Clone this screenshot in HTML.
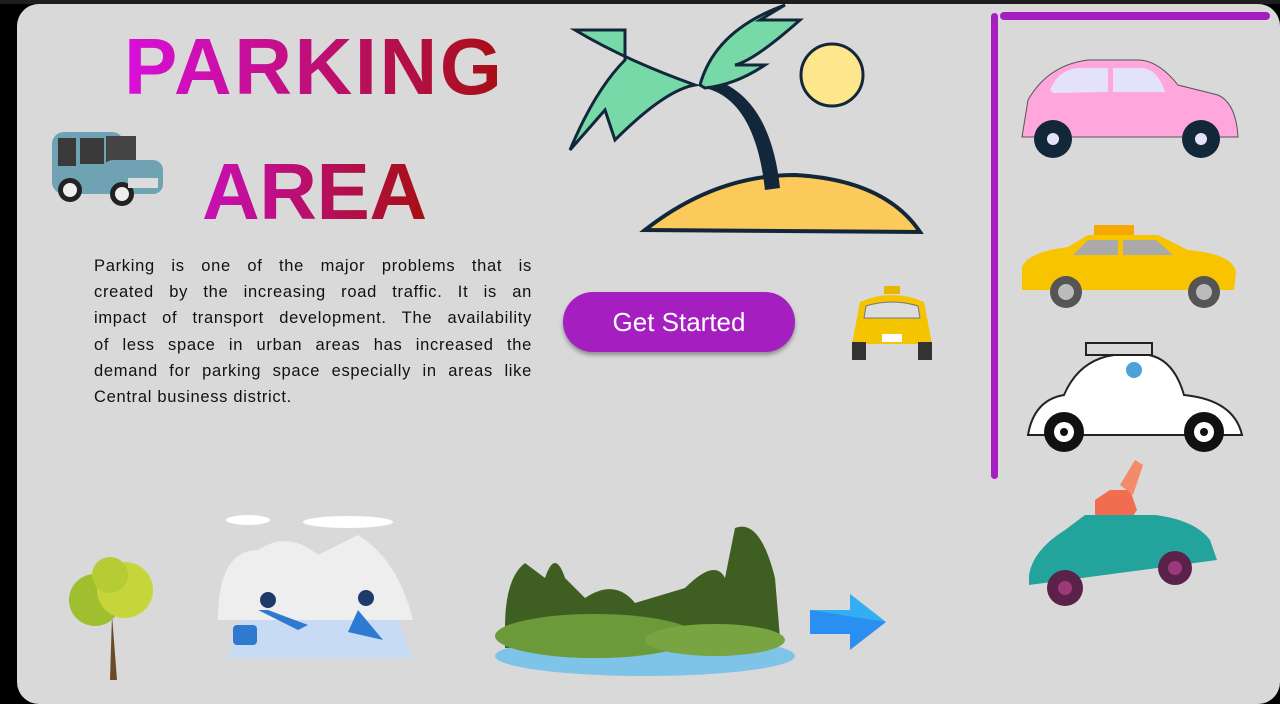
<!DOCTYPE html>
<html><head><meta charset="utf-8"><style>
html,body{margin:0;padding:0;width:1280px;height:684px;overflow:hidden;background:#000;font-family:"Liberation Sans",sans-serif}
.top{position:absolute;left:0;top:0;width:1280px;height:4px;background:#1e1e1e}
.card{position:absolute;left:17px;top:4px;width:1263px;height:700px;background:#d9d9d9;border-radius:22px}
.t{position:absolute;font-weight:bold;background:linear-gradient(90deg,#d80fdc,#a70f12);-webkit-background-clip:text;background-clip:text;color:transparent}
.p{position:absolute;left:94px;top:253px;width:438px;font-size:16.5px;line-height:26.2px;color:#111;letter-spacing:.7px}
.p div{text-align:justify;text-align-last:justify;white-space:nowrap}
.p div.l{text-align-last:left}
.btn{position:absolute;left:563px;top:292px;width:232px;height:60px;border-radius:30px;background:#a51fc0;color:#fff;font-size:26px;line-height:60px;text-align:center;box-shadow:0 3px 4px rgba(0,0,0,.35)}
svg{position:absolute}
</style></head><body>
<div class="top"></div>
<div class="card"></div>
<div class="t" style="left:124px;top:22px;font-size:80px;line-height:90px;letter-spacing:2.5px">PARKING</div>
<div class="t" style="left:202px;top:147px;font-size:80px;line-height:90px;letter-spacing:-0.5px;background:linear-gradient(90deg,#c90fb8,#a70f12);-webkit-background-clip:text;background-clip:text">AREA</div>
<div class="p">
<div>Parking is one of the major problems that is</div>
<div>created by the increasing road traffic. It is an</div>
<div>impact of transport development. The availability</div>
<div>of less space in urban areas has increased the</div>
<div>demand for parking space especially in areas like</div>
<div class="l">Central business district.</div>
</div>
<div class="btn">Get Started</div>
<div style="position:absolute;left:991px;top:13px;width:7px;height:466px;background:#a51fc0;border-radius:4px"></div>
<div style="position:absolute;left:1000px;top:12px;width:270px;height:8px;background:#a51fc0;border-radius:4px"></div>
<svg style="left:48px;top:128px" width="120" height="80"><rect x="4" y="4" width="72" height="62" rx="12" fill="#6fa3b3"/><rect x="10" y="10" width="18" height="28" fill="#3a3a3a"/><rect x="32" y="10" width="24" height="26" fill="#3a3a3a"/><rect x="58" y="8" width="30" height="28" fill="#444"/><rect x="55" y="32" width="60" height="34" rx="10" fill="#6fa3b3"/><circle cx="22" cy="62" r="12" fill="#222"/><circle cx="22" cy="62" r="7" fill="#eee"/><circle cx="74" cy="66" r="12" fill="#222"/><circle cx="74" cy="66" r="7" fill="#eee"/><rect x="80" y="50" width="30" height="10" fill="#ddd"/></svg>
<svg style="left:565px;top:0" width="370" height="245"><path d="M80 230 Q150 175 230 175 Q320 180 355 232 Z" fill="#fcc95b" stroke="#13273b" stroke-width="4"/><path d="M140 88 Q190 100 200 190 L215 188 Q205 95 145 78 Z" fill="#13273b"/><path d="M130 85 Q60 60 10 30 L60 30 L60 60 Q30 90 5 150 L40 110 L50 140 Q100 90 130 85 Z" fill="#77d8a8" stroke="#13273b" stroke-width="3"/><path d="M135 85 Q150 30 220 5 L195 20 L235 20 Q190 60 170 65 L200 65 Q170 85 140 88 Z" fill="#77d8a8" stroke="#13273b" stroke-width="3"/><circle cx="267" cy="75" r="31" fill="#fde68c" stroke="#13273b" stroke-width="3"/></svg>
<svg style="left:846px;top:284px" width="92" height="78"><rect x="38" y="2" width="16" height="8" fill="#e8b500"/><path d="M14 18 Q46 4 78 18 L86 60 L6 60 Z" fill="#f5c400"/><path d="M20 22 Q46 14 72 22 L74 34 L18 34 Z" fill="#ddd" stroke="#777"/><rect x="6" y="58" width="14" height="18" fill="#333"/><rect x="72" y="58" width="14" height="18" fill="#333"/><rect x="36" y="50" width="20" height="8" fill="#fff"/></svg>
<svg style="left:1018px;top:55px" width="225" height="105"><path d="M4 82 L10 45 Q30 10 70 5 L120 5 Q140 5 160 30 L200 40 Q218 48 220 82 Z" fill="#ffa6dc" stroke="#555" stroke-width="1"/><path d="M32 35 Q40 15 60 13 L90 13 L90 37 L35 38 Z" fill="#e4e2fb"/><path d="M95 13 L125 13 Q140 15 147 37 L95 37 Z" fill="#e4e2fb"/><circle cx="35" cy="84" r="19" fill="#13273b"/><circle cx="35" cy="84" r="6" fill="#e4e2fb"/><circle cx="183" cy="84" r="19" fill="#13273b"/><circle cx="183" cy="84" r="6" fill="#e4e2fb"/></svg>
<svg style="left:1018px;top:222px" width="222" height="88"><rect x="76" y="3" width="40" height="10" fill="#f7a800"/><path d="M4 45 Q10 30 50 25 L70 13 L140 13 L170 28 Q215 32 218 50 L216 68 L4 68 Z" fill="#f8c400"/><path d="M70 18 L100 18 L100 33 L55 33 Z M105 18 L138 18 L155 33 L105 33 Z" fill="#aaa"/><circle cx="48" cy="70" r="16" fill="#555"/><circle cx="48" cy="70" r="8" fill="#bbb"/><circle cx="186" cy="70" r="16" fill="#555"/><circle cx="186" cy="70" r="8" fill="#bbb"/></svg>
<svg style="left:1024px;top:340px" width="222" height="120"><rect x="62" y="3" width="66" height="12" fill="none" stroke="#222" stroke-width="2"/><path d="M4 95 Q10 60 40 55 Q55 20 90 15 L125 15 Q150 20 160 55 Q210 60 218 95 Z" fill="#fff" stroke="#222" stroke-width="2"/><circle cx="40" cy="92" r="20" fill="#111"/><circle cx="40" cy="92" r="10" fill="#fff"/><circle cx="40" cy="92" r="4" fill="#111"/><circle cx="180" cy="92" r="20" fill="#111"/><circle cx="180" cy="92" r="10" fill="#fff"/><circle cx="180" cy="92" r="4" fill="#111"/><circle cx="110" cy="30" r="8" fill="#4aa3d8"/></svg>
<svg style="left:1025px;top:460px" width="195" height="150"><path d="M70 40 L85 30 L105 30 L112 50 L95 75 L70 70 Z" fill="#f26d4f"/><path d="M95 25 L110 0 L118 5 L108 35 Z" fill="#f48a6a"/><path d="M4 115 Q8 90 40 70 L60 55 L130 55 Q170 60 185 80 L192 100 L4 125 Z" fill="#22a39b"/><circle cx="40" cy="128" r="18" fill="#5b2249"/><circle cx="40" cy="128" r="7" fill="#9a3a7a"/><circle cx="150" cy="108" r="17" fill="#5b2249"/><circle cx="150" cy="108" r="7" fill="#9a3a7a"/></svg>
<svg style="left:65px;top:555px" width="95" height="130"><path d="M47 60 L52 125 L45 125 Z" fill="#6b4a2c"/><circle cx="30" cy="45" r="26" fill="#9fbf2f"/><circle cx="60" cy="35" r="28" fill="#c6d63a"/><circle cx="45" cy="20" r="18" fill="#b6cc34"/></svg>
<svg style="left:208px;top:510px" width="210" height="150"><ellipse cx="40" cy="10" rx="22" ry="5" fill="#fff"/><ellipse cx="140" cy="12" rx="45" ry="6" fill="#fff"/><path d="M10 110 Q10 40 50 40 Q80 20 110 45 L150 25 Q190 50 205 110 Z" fill="#eee"/><path d="M20 148 L35 110 L190 110 L205 148 Z" fill="#c8dbf5"/><circle cx="60" cy="90" r="8" fill="#1e3a6a"/><path d="M50 100 L90 120 L100 115 L60 100 Z" fill="#2f7ad1"/><circle cx="158" cy="88" r="8" fill="#1e3a6a"/><path d="M150 100 L175 130 L140 122 Z" fill="#2f7ad1"/><rect x="25" y="115" width="24" height="20" rx="4" fill="#2f7ad1"/></svg>
<svg style="left:485px;top:518px" width="315" height="165"><ellipse cx="160" cy="138" rx="150" ry="20" fill="#7dc4e8"/><path d="M20 110 Q20 60 40 45 L60 60 Q70 30 80 60 L100 80 Q130 60 150 85 L200 70 Q230 40 240 60 L250 10 Q275 0 290 60 L295 120 L20 130 Z" fill="#3f5f22"/><ellipse cx="110" cy="118" rx="100" ry="22" fill="#6c9a3a"/><ellipse cx="230" cy="122" rx="70" ry="16" fill="#78a542"/></svg>
<svg style="left:806px;top:588px" width="84" height="68"><path d="M4 22 L44 22 L44 6 L80 34 L44 62 L44 46 L4 46 Z" fill="#2a8ff0"/><path d="M4 22 L44 22 L44 6 L80 34 Z" fill="#3ac3f3" opacity=".6"/></svg>
</body></html>
